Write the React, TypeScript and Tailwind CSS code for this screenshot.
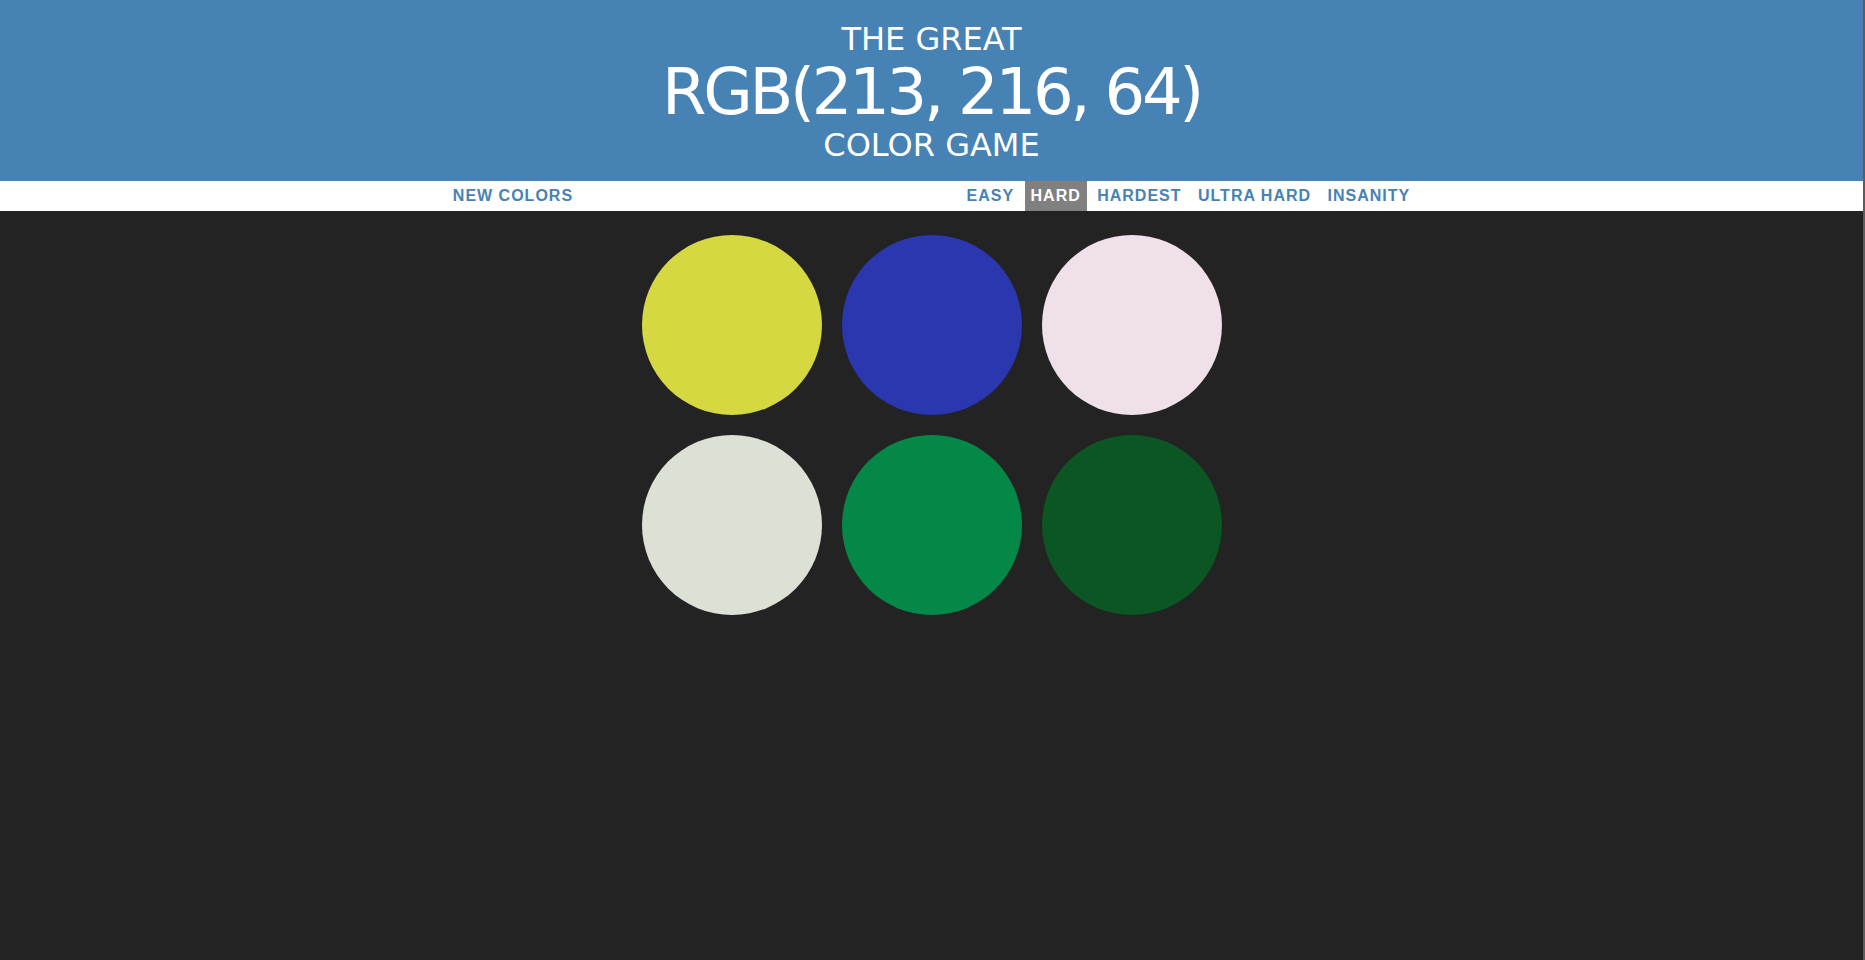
import React from "react";

const colors = ["#d5d840", "#2a37ae", "#f0e0ea", "#dde1d5", "#048847", "#0c5623"];
const modes = ["EASY", "HARD", "HARDEST", "ULTRA HARD", "INSANITY"];

export default function App() {
  return (
    <div className="flex h-screen w-full overflow-hidden bg-[#232323]">
      <div className="flex-1 flex flex-col">
        <header
          className="bg-[#4682b4] text-white text-center uppercase font-normal pt-[22px] pb-[18px] leading-[1.1]"
          style={{ fontFamily: '"Comic Sans MS", "DejaVu Sans", sans-serif' }}
        >
          <div className="text-[32px] leading-[35.2px]">The Great</div>
          <div className="text-[64px] leading-[70.4px] tracking-[-3.3px]">RGB(213, 216, 64)</div>
          <div className="text-[32px] leading-[35.2px]">Color Game</div>
        </header>
        <nav
          className="h-[30px] bg-white flex justify-center items-stretch gap-[4.45px] text-[16px] font-bold tracking-[1px] text-[#4682b4]"
          style={{ fontFamily: '"Liberation Sans", Arial, sans-serif' }}
        >
          <button className="px-[6px] uppercase">New Colors</button>
          <span className="w-[20%]" />
          {modes.map((m) => (
            <button
              key={m}
              className={
                m === "HARD"
                  ? "px-[6px] bg-[#808080] text-white"
                  : "px-[6px]"
              }
            >
              {m}
            </button>
          ))}
        </nav>
        <main className="w-[580px] mx-auto mt-[24px] flex flex-wrap gap-[20px]">
          {colors.map((c, i) => (
            <div key={i} className="w-[180px] h-[180px] rounded-full" style={{ backgroundColor: c }} />
          ))}
        </main>
      </div>
      <div className="w-[2px] bg-[#5c5c5c]" />
    </div>
  );
}
